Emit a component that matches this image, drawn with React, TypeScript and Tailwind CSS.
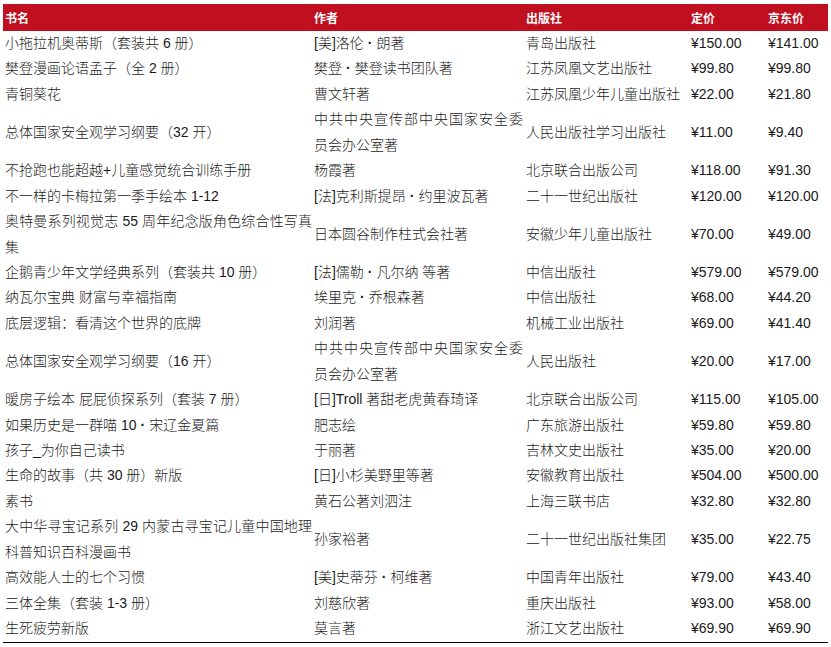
import React from "react";

type Row = [string, string, string, string, string];

const rows: Row[] = [
  ["小拖拉机奥蒂斯（套装共 6 册）", "[美]洛伦·朗著", "青岛出版社", "¥150.00", "¥141.00"],
  ["樊登漫画论语孟子（全 2 册）", "樊登·樊登读书团队著", "江苏凤凰文艺出版社", "¥99.80", "¥99.80"],
  ["青铜葵花", "曹文轩著", "江苏凤凰少年儿童出版社", "¥22.00", "¥21.80"],
  ["总体国家安全观学习纲要（32 开）", "中共中央宣传部中央国家安全委员会办公室著", "人民出版社学习出版社", "¥11.00", "¥9.40"],
  ["不抢跑也能超越+儿童感觉统合训练手册", "杨霞著", "北京联合出版公司", "¥118.00", "¥91.30"],
  ["不一样的卡梅拉第一季手绘本 1-12", "[法]克利斯提昂·约里波瓦著", "二十一世纪出版社", "¥120.00", "¥120.00"],
  ["奥特曼系列视觉志 55 周年纪念版角色综合性写真集", "日本圆谷制作柱式会社著", "安徽少年儿童出版社", "¥70.00", "¥49.00"],
  ["企鹅青少年文学经典系列（套装共 10 册）", "[法]儒勒·凡尔纳 等著", "中信出版社", "¥579.00", "¥579.00"],
  ["纳瓦尔宝典 财富与幸福指南", "埃里克·乔根森著", "中信出版社", "¥68.00", "¥44.20"],
  ["底层逻辑：看清这个世界的底牌", "刘润著", "机械工业出版社", "¥69.00", "¥41.40"],
  ["总体国家安全观学习纲要（16 开）", "中共中央宣传部中央国家安全委员会办公室著", "人民出版社", "¥20.00", "¥17.00"],
  ["暖房子绘本 屁屁侦探系列（套装 7 册）", "[日]Troll 著甜老虎黄春琦译", "北京联合出版公司", "¥115.00", "¥105.00"],
  ["如果历史是一群喵 10·宋辽金夏篇", "肥志绘", "广东旅游出版社", "¥59.80", "¥59.80"],
  ["孩子_为你自己读书", "于丽著", "吉林文史出版社", "¥35.00", "¥20.00"],
  ["生命的故事（共 30 册）新版", "[日]小杉美野里等著", "安徽教育出版社", "¥504.00", "¥500.00"],
  ["素书", "黄石公著刘泗注", "上海三联书店", "¥32.80", "¥32.80"],
  ["大中华寻宝记系列 29 内蒙古寻宝记儿童中国地理科普知识百科漫画书", "孙家裕著", "二十一世纪出版社集团", "¥35.00", "¥22.75"],
  ["高效能人士的七个习惯", "[美]史蒂芬·柯维著", "中国青年出版社", "¥79.00", "¥43.40"],
  ["三体全集（套装 1-3 册）", "刘慈欣著", "重庆出版社", "¥93.00", "¥58.00"],
  ["生死疲劳新版", "莫言著", "浙江文艺出版社", "¥69.90", "¥69.90"],
];

function withDots(s: string) {
  const parts = s.split("·");
  return parts.map((p, i) => (
    <React.Fragment key={i}>
      {p}
      {i < parts.length - 1 && <span className="mx-[4px] font-bold">·</span>}
    </React.Fragment>
  ));
}

const gridCols = "grid grid-cols-[309px_212px_165px_77px_62px]";

export default function App() {
  return (
    <div className="w-[831px] h-[647px] bg-white pt-[4px] pl-[3px] font-['Liberation_Sans','Noto_Sans_CJK_SC',sans-serif]">
      <div className="w-[825px]">
        <div className={`${gridCols} h-[27px] items-center bg-[#c00f1e] text-white text-[12px] font-bold font-['Noto_Sans_CJK_SC',sans-serif]`}>
          <div className="pl-[2px]">书名</div>
          <div className="pl-[2px]">作者</div>
          <div className="pl-[2px]">出版社</div>
          <div className="pl-[2px]">定价</div>
          <div className="pl-[2px]">京东价</div>
        </div>
        <div className="border-b-[1.5px] border-black">
          {rows.map((r, i) => (
            <div key={i} className={`${gridCols} items-center text-[14px] font-light leading-[25.43px] text-[#1a1a1a]`}>
              <div className="pl-[2px] text-justify">{withDots(r[0])}</div>
              <div className="pl-[2px] pr-[1px] text-justify">{withDots(r[1])}</div>
              <div className="pl-[2px]">{r[2]}</div>
              <div className="pl-[2px]">{r[3]}</div>
              <div className="pl-[2px]">{r[4]}</div>
            </div>
          ))}
        </div>
      </div>
    </div>
  );
}
